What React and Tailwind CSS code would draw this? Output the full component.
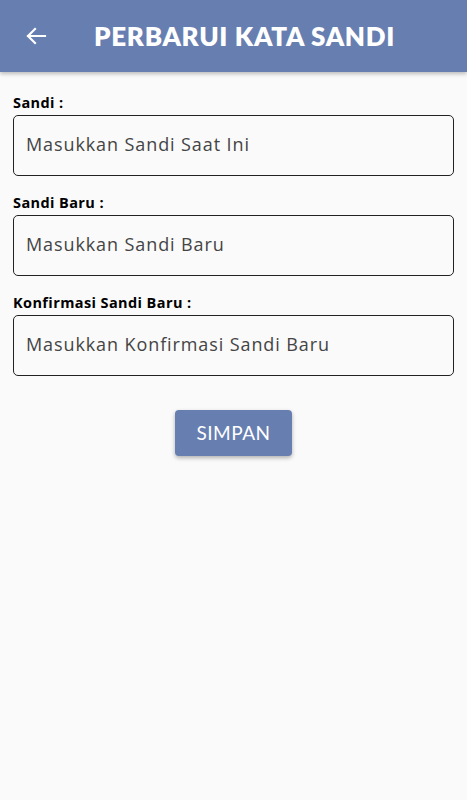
const Field = ({ label, placeholder }) => (
  <div className="mb-[18px]">
    <p className="text-[14.5px] font-bold text-black leading-[18px] mb-[3px] tracking-[0.4px]" style={{ fontFamily: '"Open Sans", sans-serif' }}>{label}</p>
    <div className="h-[61px] border border-[#222] rounded-[5px] flex items-center px-[12px] pb-[2px]">
      <span className="text-[18px] text-[#444] tracking-[0.9px]" style={{ fontFamily: '"Open Sans", sans-serif' }}>{placeholder}</span>
    </div>
  </div>
);

const App = () => (
  <div className="min-h-[800px] bg-[#fafafa]" style={{ fontFamily: '"Lato", "Open Sans", sans-serif' }}>
    <div className="h-[72px] bg-[#677eb1] flex items-center shadow-[0_2px_4px_rgba(0,0,0,0.25)]">
      <svg className="ml-[24px] w-[24px] h-[24px]" viewBox="0 0 24 24" fill="none" stroke="white" strokeWidth="2.2" strokeLinecap="square">
        <path d="M21 12H4M11 5l-7 7 7 7" />
      </svg>
      <h1 className="ml-[46px] text-white text-[26px] font-extrabold tracking-[0.7px]">PERBARUI KATA SANDI</h1>
    </div>
    <div className="px-[13px] pt-[22px]">
      <Field label="Sandi :" placeholder="Masukkan Sandi Saat Ini" />
      <Field label="Sandi Baru :" placeholder="Masukkan Sandi Baru" />
      <Field label="Konfirmasi Sandi Baru :" placeholder="Masukkan Konfirmasi Sandi Baru" />
      <div className="flex justify-center pt-[16px]">
        <button className="w-[117px] h-[46px] bg-[#677eb1] rounded-[4px] text-white text-[19px] tracking-[0.5px] shadow-[0_2px_4px_rgba(0,0,0,0.3)]">
          SIMPAN
        </button>
      </div>
    </div>
  </div>
);

export default App;
